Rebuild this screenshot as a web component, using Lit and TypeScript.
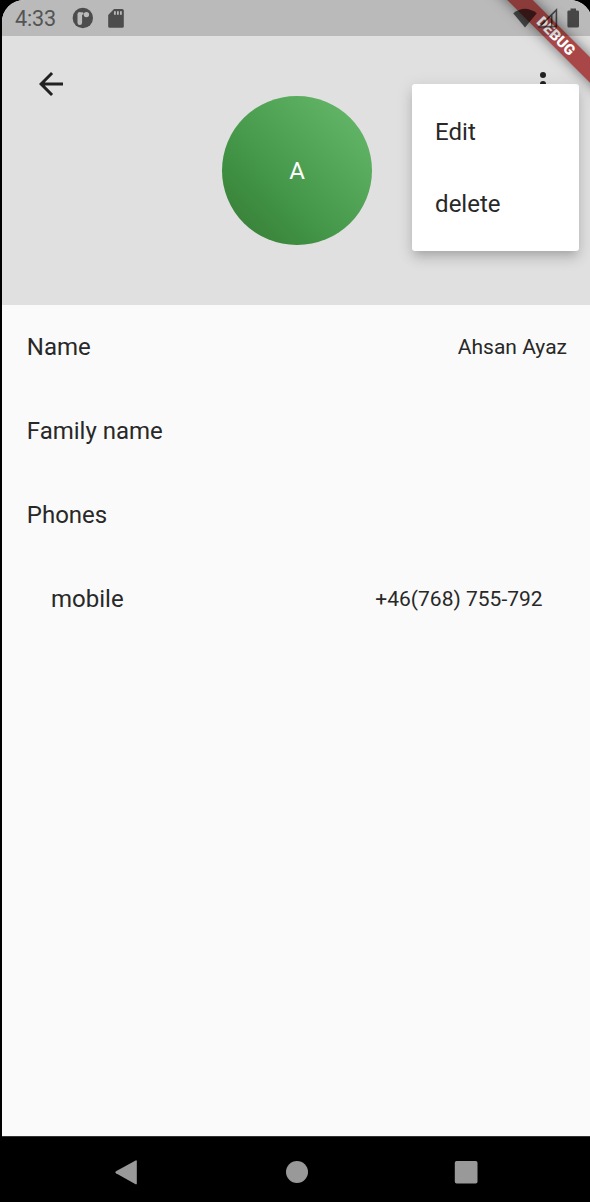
import { LitElement, html, css, svg } from "lit";
import { customElement } from "lit/decorators.js";

@customElement("app-root")
export class AppRoot extends LitElement {
  static styles = css`
    :host {
      display: block;
      width: 590px;
      height: 1202px;
      box-sizing: border-box;
      padding-left: 2px;
      overflow: hidden;
      background: #000;
      font-family: Roboto, sans-serif;
      color: #282828;
    }
    svg { display: block; flex: none; }
    .screen {
      position: relative;
      width: 590px;
      height: 1202px;
      display: flex;
      flex-direction: column;
      background: #fafafa;
      border-radius: 22px 22px 0 0;
      overflow: hidden;
    }
    /* Translucent system bar, drawn over the app and its debug ribbon. */
    .status {
      position: absolute;
      left: 0;
      top: 0;
      width: 590px;
      height: 36px;
      display: flex;
      align-items: center;
      background: rgba(0,0,0,.17);
      color: #545454;
      font-size: 21.6px;
      line-height: 36px;
    }
    .time { margin-left: 13px; width: 57px; padding-top: 1px; letter-spacing: -0.2px; }
    .space { flex: 1; }
    .signals { opacity: .62; }
    .header {
      height: 305px;
      flex: none;
      box-sizing: border-box;
      background: #e0e0e0;
      display: grid;
      grid-template-columns: 1fr 150px 1fr;
      align-items: start;
      padding: 66px 31px 0;
    }
    .more { justify-self: end; }
    .avatar {
      width: 150px;
      height: 149.6px;
      margin-top: 29.6px;
      border-radius: 50%;
      background: linear-gradient(45deg, #3a833a 12%, #3f9043 30%, #4c9f51 52%, #63b567 90%);
      color: #fff;
      font-size: 24px;
      line-height: 150px;
      text-align: center;
    }
    .rows { flex: 1; }
    .row {
      height: 84px;
      display: flex;
      align-items: center;
      justify-content: space-between;
      padding: 0 25px 0 24.8px;
      font-size: 24px;
    }
    .indent { padding: 0 49.4px 0 49px; }
    .value { font-size: 21px; }
    .nav {
      height: 66px;
      flex: none;
      box-sizing: border-box;
      border-top: 1px solid #333;
      background: #000;
    }
    .menu {
      position: absolute;
      left: 409.5px;
      top: 83.7px;
      width: 167.5px;
      height: 167.5px;
      box-sizing: border-box;
      padding: 12px 23.6px;
      background: #fff;
      border-radius: 3px;
      font-size: 24px;
      line-height: 72px;
      box-shadow: 0 6px 8px -3px rgba(0,0,0,.14), 0 9px 14px 0 rgba(0,0,0,.08), 0 3px 16px 2px rgba(0,0,0,.08);
    }
    .banner {
      position: absolute;
      left: 453.5px;
      top: 26.9px;
      width: 200px;
      height: 18px;
      transform: rotate(45deg);
      background: #a94748;
      box-shadow: 0 0 13px rgba(0,0,0,.5);
      color: #fff;
      font-size: 14.8px;
      font-weight: 900;
      line-height: 18px;
      text-align: center;
    }
  `;

  render() {
    return html`
      <div class="screen">
        <div class="header">
          <svg width="36" height="36" viewBox="0 0 24 24"><path fill="#212121" d="M20 11H7.83l5.59-5.59L12 4l-8 8 8 8 1.41-1.41L7.83 13H20v-2z" /></svg>
          <div class="avatar">A</div>
          <svg class="more" width="36" height="36" viewBox="0 0 24 24">
            ${[6, 12, 18].map((y) => svg`<circle cx="12" cy=${y} r="2" fill="#212121" />`)}
          </svg>
        </div>
        <div class="rows">
          <div class="row"><span>Name</span><span class="value">Ahsan Ayaz</span></div>
          <div class="row"><span>Family name</span></div>
          <div class="row"><span>Phones</span></div>
          <div class="row indent"><span>mobile</span><span class="value">+46(768) 755-792</span></div>
        </div>
        <div class="nav">
          <svg width="590" height="65" viewBox="2 1137 590 65" fill="#999">
            <path d="M116 1171.3L135.6 1160.4Q136.8 1160 136.8 1161.3V1183.4Q136.8 1184.7 135.6 1184.2L116 1173.3Q114.4 1172.3 116 1171.3z" />
            <circle cx="297" cy="1172" r="11" />
            <rect x="454.8" y="1161" width="22.7" height="22.6" rx="1.8" />
          </svg>
        </div>
        <div class="menu"><div>Edit</div><div>delete</div></div>
        <div class="banner">DEBUG</div>
        <div class="status">
          <span class="time">4:33</span>
          <svg width="60" height="36" viewBox="72 0 60 36">
            <circle cx="82.8" cy="18" r="10.2" fill="#4c4c4c" />
            <rect x="77.5" y="12" width="4.6" height="13" rx="2.2" fill="#bababa" />
            <circle cx="86.4" cy="14.6" r="2.7" fill="#bababa" />
            <circle cx="82.2" cy="13.5" r="1.3" fill="#bababa" />
            <path d="M114 9h8.2q1.6 0 1.6 1.6v15.6q0 1.6-1.6 1.6h-12.4q-1.6 0-1.6-1.6V15z" fill="#4c4c4c" />
            <path d="M114 11.2h1.8v3.6h-1.8zM117 11.2h1.8v3.6h-1.8zM120 11.2h1.8v3.6h-1.8z" fill="#bababa" />
          </svg>
          <span class="space"></span>
          <svg class="signals" width="80" height="36" viewBox="512 0 80 36">
            <path d="M513.2 13.2Q525 4.2 536.8 13.2L525 27.4z" />
            <path d="M539.6 26.6L556.4 10V26.6zM551.7 14.5V26.6" fill="none" stroke="#000" stroke-width="1.6" />
            <path d="M570.5 8.5h5.5v2h1.7q1.3 0 1.3 1.3V26q0 1.5-1.5 1.5h-8.6q-1.5 0-1.5-1.5V11.8q0-1.3 1.3-1.3h1.8z" />
          </svg>
        </div>
      </div>
    `;
  }
}
